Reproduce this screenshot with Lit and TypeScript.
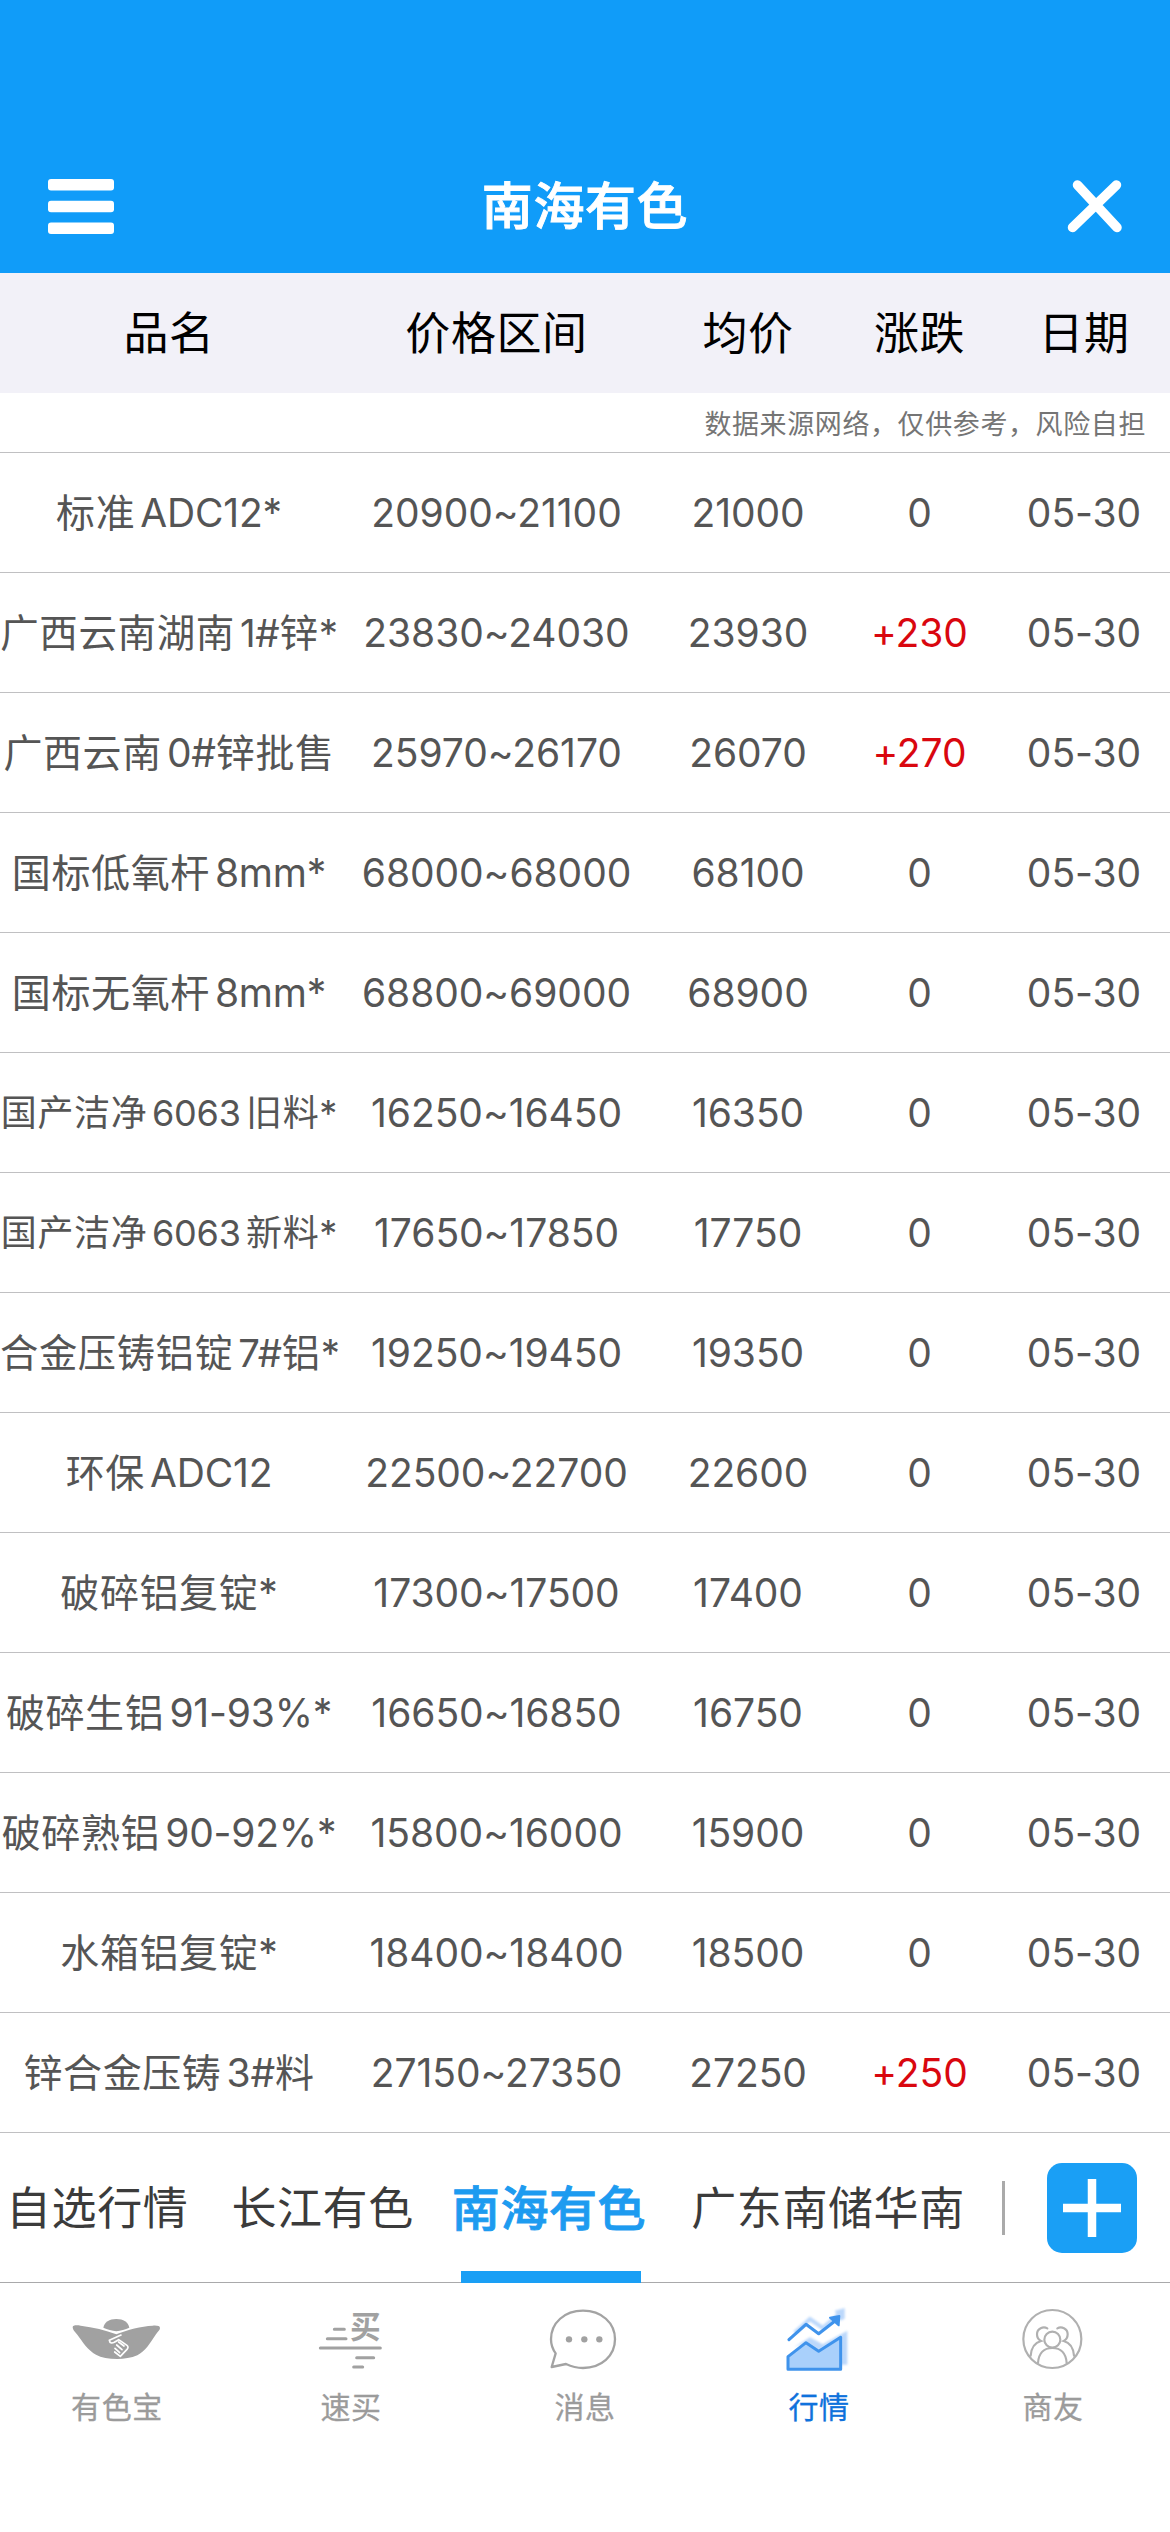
import { LitElement, html, css, svg } from "lit";
import { customElement } from "lit/decorators.js";
import { classMap } from "lit/directives/class-map.js";
import { styleMap } from "lit/directives/style-map.js";

interface Quote {
  name: string;
  range: string;
  avg: string;
  change: string;
  date: string;
  size?: number;
}

const q = (name: string, range: string, avg: string, change = "0", size = 39): Quote => ({
  name, range, avg, change, date: "05-30", size,
});

const QUOTES: Quote[] = [
  q("标准ADC12*", "20900~21100", "21000"),
  q("广西云南湖南1#锌*", "23830~24030", "23930", "+230", 38.5),
  q("广西云南0#锌批售", "25970~26170", "26070", "+270"),
  q("国标低氧杆8mm*", "68000~68000", "68100"),
  q("国标无氧杆8mm*", "68800~69000", "68900"),
  q("国产洁净6063旧料*", "16250~16450", "16350", "0", 36),
  q("国产洁净6063新料*", "17650~17850", "17750", "0", 36),
  q("合金压铸铝锭7#铝*", "19250~19450", "19350", "0", 38.3),
  q("环保ADC12", "22500~22700", "22600"),
  q("破碎铝复锭*", "17300~17500", "17400"),
  q("破碎生铝91-93%*", "16650~16850", "16750"),
  q("破碎熟铝90-92%*", "15800~16000", "15900"),
  q("水箱铝复锭*", "18400~18400", "18500"),
  q("锌合金压铸3#料", "27150~27350", "27250", "+250"),
];

const ICONS = {
  treasure: svg`<svg class="icon" viewBox="96 51 270 198">
    <path class="fill" d="M190 113C193 97 208 87 229 87C250 87 265 97 268 113C256 119 242 122 229 124C216 122 202 119 190 113Z"/>
    <path class="fill" d="M98 112C98 106 108 105 122 107C160 112 196 120 229 133C262 120 304 108 338 107C352 106 360 108 360 114C360 120 354 124 348 133C330 160 316 184 292 196C274 204 252 207 232 207C206 207 184 203 168 194C144 181 128 156 112 134C104 124 98 120 98 112Z"/>
    <g class="gap" transform="translate(78 45)">
      <path d="M165 90L130 106Q132 118 145 112L158 104L183 121Q189 126 183 133L163 154L146 141"/>
      <path d="M158 111L174 123M152 120L168 134M147 130L161 143"/>
    </g>
  </svg>`,
  fast: svg`<svg class="icon" viewBox="798 51 270 198">
    <path class="bar" d="M883 118H913M862 146H918M841 174H1021M950 203H1001M941 231H968"/>
    <text class="mark" x="930" y="145">买</text>
  </svg>`,
  message: svg`<svg class="icon" viewBox="60 51 270 198">
    <path class="line" d="M95 231L107 190C98 178 93 165 93 148C93 98 134 62 189 62C244 62 285 98 285 148C285 198 244 234 189 234C169 234 153 229 138 222Z"/>
    <circle class="fill" cx="147" cy="148" r="9.5"/>
    <circle class="fill" cx="193" cy="148" r="9.5"/>
    <circle class="fill" cx="238" cy="148" r="9.5"/>
  </svg>`,
  market: svg`<svg class="icon" viewBox="762 51 270 198">
    <g class="shade">
      <path class="ghost" d="M824 128L870 87L908 114L958 72"/>
      <path d="M944 62L974 54V86L960 92Z"/>
      <path d="M822 172L870 142L908 163L982 122V224H962V142L896 182L858 158Z"/>
    </g>
    <path class="area" d="M804 200L858 158L896 184L962 142V238H804Z"/>
    <path class="trend" d="M807 149L858 103L896 131L942 95"/>
    <path class="head" d="M930 83L958 78L956 106Z"/>
  </svg>`,
  friends: svg`<svg class="icon" viewBox="144 51 270 198">
    <g class="thin">
      <circle cx="277" cy="147" r="87"/>
      <circle cx="277" cy="149" r="24"/>
      <path d="M234 219C236 190 252 174 277 174C302 174 318 190 320 219"/>
      <path d="M262 115C250 108 231 115 231 133C231 142 235 149 243 153C224 158 214 173 212 197"/>
      <path d="M292 115C304 108 323 115 323 133C323 142 319 149 311 153C330 158 340 173 342 197"/>
    </g>
  </svg>`,
};

const NAV = [
  { label: "有色宝", icon: ICONS.treasure },
  { label: "速买", icon: ICONS.fast },
  { label: "消息", icon: ICONS.message },
  { label: "行情", icon: ICONS.market, active: true },
  { label: "商友", icon: ICONS.friends },
];

const HAN = /[\u4e00-\u9fff]/;

@customElement("app-root")
export class AppRoot extends LitElement {
  static styles = css`
    :host {
      display: flex;
      flex-direction: column;
      width: 1170px;
      height: 2532px;
      overflow: hidden;
      background: #fff;
      font-family: Inter, "Noto Sans CJK SC", sans-serif;
      color: #555;
      white-space: nowrap;
      text-autospace: no-autospace;
    }
    * { box-sizing: border-box; }
    .header {
      height: 273px;
      padding: 140px 48px 0;
      display: grid;
      grid-template-columns: 66px 1fr 66px;
      align-items: center;
      background: #109cf9;
      color: #fff;
    }
    .menu { display: block; width: 66px; height: 55px; fill: #fff; }
    .close { display: block; width: 56px; height: 54px; justify-self: end; fill: none; stroke: #fff; stroke-width: 9.5; stroke-linecap: round; }
    .title { text-align: center; font-size: 51px; font-weight: 500; -webkit-text-stroke: 0.9px currentColor; letter-spacing: 0.6px; line-height: 60px; margin: 0; }
    .cols {
      display: grid;
      grid-template-columns: 338px 317px 186px 157px 172px;
      align-items: center;
      text-align: center;
    }
    .heads { height: 120px; padding-bottom: 5px; background: #f2f1f8; color: #000; font-size: 45px; letter-spacing: 0.6px; }
    .note {
      height: 60px;
      padding-right: 24px;
      display: flex;
      align-items: center;
      justify-content: flex-end;
      font-size: 27px;
      letter-spacing: 0.6px;
      color: #757575;
      border-bottom: 1px solid #c0c0c2;
    }
    .row { height: 120px; border-bottom: 1px solid #c0c0c2; font-size: 39px; letter-spacing: -0.05px; }
    .name { display: block; padding-bottom: 5px; letter-spacing: -0.2px; }
    .han { letter-spacing: 0.6px; }
    .up { color: #d9070f; }
    .pre { margin-left: 0.13em; }
    .post { margin-right: 0.15em; }
    .tabs { height: 150px; display: flex; align-items: center; border-bottom: 1px solid #a9a9ab; padding: 0 33px 0 6px; font-size: 45px; letter-spacing: 0.6px; color: #3b3b3b; }
    .tab { flex: none; height: 150px; padding-bottom: 4px; display: flex; align-items: center; margin-right: 43px; }
    .tab.on { position: relative; padding-bottom: 5px; margin: 0 45px 0 -5px; color: #1d9bf0; font-size: 48px; font-weight: 500; -webkit-text-stroke: 0.9px currentColor; }
    .tab.on::after { content: ""; position: absolute; left: 9px; right: 5px; bottom: 0; height: 12px; background: #1a9ff5; }
    .rule { flex: none; width: 3px; height: 54px; background: #aaa; margin-left: auto; }
    .add { flex: none; margin-left: 42px; width: 90px; height: 90px; border-radius: 15px; background: #1a9ff5; display: flex; align-items: center; justify-content: center; }
    .tab:nth-child(4) { margin-right: 0; }
    .add svg { width: 58px; height: 58px; stroke: #fff; stroke-width: 8.5; }
    .nav { display: grid; grid-template-columns: repeat(5, 1fr); color: #9b9b9b; }
    .item { padding-top: 24px; display: flex; flex-direction: column; align-items: center; font-size: 30px; letter-spacing: 0.6px; }
    .item span { margin-top: 12px; line-height: 44px; -webkit-text-stroke: 0.3px currentColor; }
    .item.on { color: #0f72dc; }
    .icon { display: block; width: 90px; height: 66px; overflow: visible; }
    .fill { fill: #a1a1a1; }
    .gap { fill: none; stroke: #fff; stroke-width: 5; stroke-linejoin: round; stroke-linecap: round; }
    .bar { fill: none; stroke: #a1a1a1; stroke-width: 9; stroke-linecap: round; }
    .mark { fill: #a1a1a1; font: 700 92px "Noto Sans CJK SC", sans-serif; }
    .line { fill: none; stroke: #a3a3a3; stroke-width: 7; stroke-linejoin: round; }
    .thin { fill: none; stroke: #b0b0b0; stroke-width: 6.5; stroke-linecap: round; }
    .shade { fill: #bcd8fb; filter: blur(3px); }
    .ghost { fill: none; stroke: #bcd8fb; stroke-width: 12; }
    .area { fill: #a9d0fb; stroke: #3f93ec; stroke-width: 9; stroke-linejoin: round; }
    .trend { fill: none; stroke: #3f93ec; stroke-width: 9.5; stroke-linecap: round; stroke-linejoin: round; }
    .head { fill: #3f93ec; stroke: #3f93ec; stroke-width: 6; stroke-linejoin: round; }
  `;

  // Splits a name into Han and Latin runs, with a small gap between Han and letters or digits.
  private name(text: string) {
    const runs = text.match(/[\u4e00-\u9fff]+|[^\u4e00-\u9fff]+/g) ?? [];
    return runs.map((run, i) => {
      const latin = !HAN.test(run);
      return html`<span class=${classMap({
        han: !latin,
        pre: latin && i > 0 && /^[A-Za-z0-9]/.test(run),
        post: latin && i < runs.length - 1 && /[A-Za-z0-9]$/.test(run),
      })}>${run}</span>`;
    });
  }

  render() {
    return html`
      <header class="header">
        <svg class="menu" viewBox="0 0 66 55">
          <rect width="66" height="11.5" rx="3"/><rect y="21.7" width="66" height="11.5" rx="3"/><rect y="43.4" width="66" height="11.5" rx="3"/>
        </svg>
        <h1 class="title">南海有色</h1>
        <svg class="close" viewBox="0 0 56 54"><path d="M11.5 5L51 47.5M50.5 5L6.5 47.5"/></svg>
      </header>
      <div class="cols heads">
        <span>品名</span><span>价格区间</span><span>均价</span><span>涨跌</span><span>日期</span>
      </div>
      <div class="note">数据来源网络，仅供参考，风险自担</div>
      ${QUOTES.map((r) => html`
        <div class="cols row">
          <span class="name" style=${styleMap({ fontSize: `${r.size}px` })}>${this.name(r.name)}</span>
          <span>${r.range}</span>
          <span>${r.avg}</span>
          <span class=${classMap({ up: r.change.startsWith("+") })}>${r.change}</span>
          <span>${r.date}</span>
        </div>`)}
      <div class="tabs">
        <span class="tab">自选行情</span>
        <span class="tab">长江有色</span>
        <span class="tab on">南海有色</span>
        <span class="tab">广东南储华南</span>
        <span class="rule"></span>
        <span class="add"><svg viewBox="0 0 58 58"><path d="M29 0V58M0 29H58"/></svg></span>
      </div>
      <nav class="nav">
        ${NAV.map((n) => html`<div class=${classMap({ item: true, on: !!n.active })}>${n.icon}<span>${n.label}</span></div>`)}
      </nav>
    `;
  }
}
